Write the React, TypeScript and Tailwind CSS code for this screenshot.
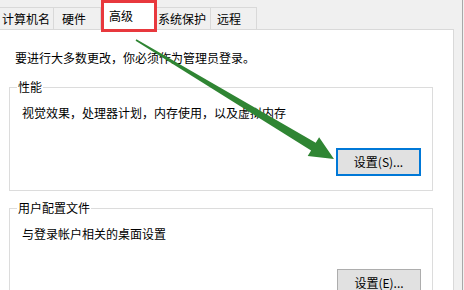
const tabs = [
  { label: "计算机名", box: "w-[54px] pl-[2px]" },
  { label: "硬件", box: "w-[47px] pl-[8px]" },
];

const tabsRight = [
  { label: "系统保护", box: "w-[54px] pl-[1px]" },
  { label: "远程", box: "w-[46px] pl-[6px]" },
];

function Tab({ label, box }: { label: string; box: string }) {
  return (
    <div className={`${box} h-[22px] border-t border-r border-[#d9d9d9] bg-[#f0f0f0] pt-[3px] leading-[16px] whitespace-nowrap`}>
      {label}
    </div>
  );
}

function Group({ title, text, button, focused }: { title: string; text: string; button: string; focused?: boolean }) {
  return (
    <fieldset className="h-[112px] w-[424px] border border-[#dcdcdc]">
      <legend className="ml-[7px] px-[1px] leading-[16px]">{title}</legend>
      <div className="mt-[10px] pl-[12px] leading-[16px]">{text}</div>
      <div className="mt-[27px] flex justify-end pr-[11px]">
        <button
          className={
            focused
              ? "h-[28px] w-[85px] border-2 border-[#0078d7] bg-[#e1e1e1] leading-[16px]"
              : "h-[28px] w-[84px] border border-[#adadad] bg-[#e1e1e1] leading-[16px]"
          }
        >
          {button}
        </button>
      </div>
    </fieldset>
  );
}

export default function App() {
  return (
    <div className="relative flex h-[290px] w-[464px] overflow-hidden bg-[#f0f0f0] font-['Noto_Sans_CJK_SC',sans-serif] text-[12px] text-black">
      <div className="flex w-[454px] flex-col">
        {/* tab strip */}
        <div className="flex h-[32px] items-end">
          {tabs.map((t) => (
            <Tab key={t.label} {...t} />
          ))}
          <div className="relative z-10 -mb-[3px] h-[32px] w-[56px] border-[3px] border-[#e8383d] bg-white pl-[5px] pt-[5px] leading-[16px]">
            高级
          </div>
          {tabsRight.map((t) => (
            <Tab key={t.label} {...t} />
          ))}
        </div>

        {/* tab page */}
        <div className="flex-1 border-t border-r border-[#d9d9d9] bg-white pl-[9px]">
          <div className="mt-[20px] ml-[6px] leading-[16px]">要进行大多数更改，你必须作为管理员登录。</div>
          <div className="mt-[13px]">
            <Group title="性能" text="视觉效果，处理器计划，内存使用，以及虚拟内存" button="设置(S)..." focused />
          </div>
          <div className="mt-[9px]">
            <Group title="用户配置文件" text="与登录帐户相关的桌面设置" button="设置(E)..." />
          </div>
        </div>
      </div>
      <div className="w-[8px]" />
      <div className="w-px bg-[#a8a8a8]" />

      {/* annotation arrow */}
      <svg className="pointer-events-none absolute left-0 top-0 z-20" width="464" height="290" viewBox="0 0 464 290">
        <polygon
          points="135.6,40.7 136.4,39.3 315.7,142.7 319.1,137.2 334,159 307.7,156 311.1,150.5"
          fill="#2f8533"
        />
      </svg>
    </div>
  );
}
